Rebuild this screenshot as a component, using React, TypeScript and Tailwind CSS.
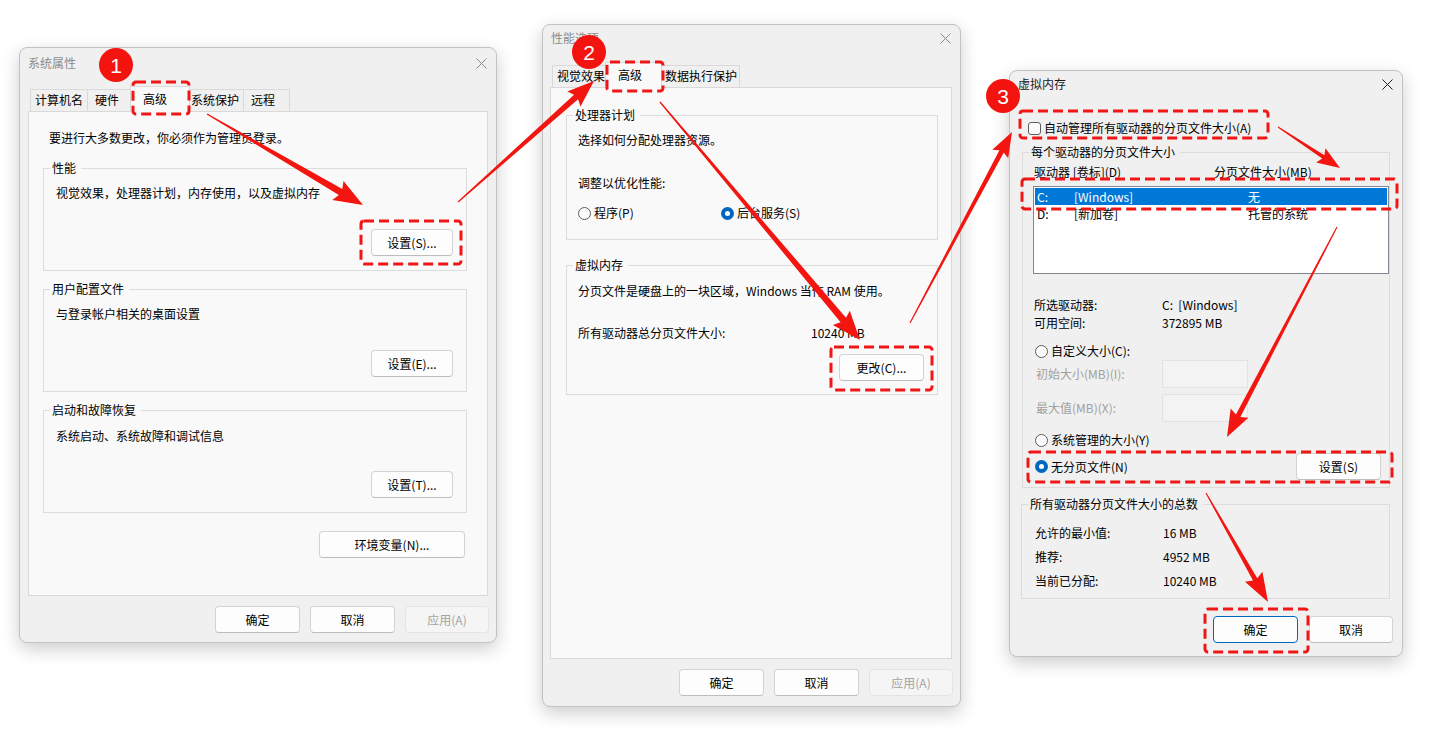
import React from 'react';

type Pt = [number, number];

// tapered annotation arrow: thin tail, wider neck, triangular head
function arrowPoints(tail: Pt, tip: Pt, shaft: number, headL: number, headW: number) {
  const dx = tip[0] - tail[0];
  const dy = tip[1] - tail[1];
  const len = Math.hypot(dx, dy);
  const ux = dx / len;
  const uy = dy / len;
  const nx = -uy;
  const ny = ux;
  const neck: Pt = [tip[0] - ux * headL, tip[1] - uy * headL];
  const wing: Pt = [tip[0] - ux * (headL + 3), tip[1] - uy * (headL + 3)];
  const p = (b: Pt, s: number) => `${(b[0] + nx * s).toFixed(1)},${(b[1] + ny * s).toFixed(1)}`;
  return [p(tail, 0.6), p(neck, shaft / 2), p(wing, headW / 2), `${tip[0]},${tip[1]}`, p(wing, -headW / 2), p(neck, -shaft / 2), p(tail, -0.6)].join(' ');
}

const arrows: { tail: Pt; tip: Pt; shaft: number; headL: number; headW: number }[] = [
  { tail: [207, 114], tip: [363, 205], shaft: 7, headL: 26, headW: 22 },
  { tail: [458, 202], tip: [594, 81], shaft: 6, headL: 24, headW: 20 },
  { tail: [660, 102], tip: [860, 340], shaft: 7, headL: 26, headW: 22 },
  { tail: [910, 323], tip: [1012, 132], shaft: 5, headL: 22, headW: 18 },
  { tail: [1278, 127], tip: [1340, 168], shaft: 4, headL: 20, headW: 17 },
  { tail: [1337, 227], tip: [1227, 437], shaft: 5, headL: 24, headW: 20 },
  { tail: [1206, 493], tip: [1268, 602], shaft: 5, headL: 26, headW: 20 },
];

const marks = [
  [133, 82, 189, 114],
  [361, 221, 461, 264],
  [607, 62, 663, 91],
  [831, 347, 932, 390],
  [1020, 111, 1268, 138],
  [1022, 179, 1397, 209],
  [1028, 452, 1392, 482],
  [1205, 609, 1308, 652],
];

function XIcon({ active }: { active?: boolean }) {
  return (
    <svg width="11" height="11" viewBox="0 0 11 11" className="shrink-0">
      <path d="M0.5 0.5 L10.5 10.5 M10.5 0.5 L0.5 10.5" stroke={active ? '#1b1b1b' : '#8a8a8a'} strokeWidth="1" />
    </svg>
  );
}

function Win({ className, title, titleH, active, children }: { className: string; title: string; titleH: string; active?: boolean; children: React.ReactNode }) {
  return (
    <div className={`absolute flex flex-col rounded-[8px] border border-[#c2c2c2] bg-[#f0f0f0] shadow-[0_6px_18px_rgba(0,0,0,0.2)] ${className}`}>
      <div className={`flex shrink-0 items-center justify-between pl-[8px] pr-[9px] ${titleH}`}>
        <span className={active ? 'text-[#1a1a1a]' : 'text-[#8c8c8c]'}>{title}</span>
        <XIcon active={active} />
      </div>
      {children}
    </div>
  );
}

function Btn({ children, className = '', disabled, focused }: { children: React.ReactNode; className?: string; disabled?: boolean; focused?: boolean }) {
  const look = disabled
    ? 'border-[#e4e4e4] bg-[#f5f5f5] text-[#a3a3a3]'
    : focused
      ? 'border-[#0067c0] bg-[#fdfdfd] text-black'
      : 'border-[#d3d3d3] border-b-[#bdbdbd] bg-[#fdfdfd] text-black';
  return (
    <div className={`flex h-[27px] shrink-0 items-center justify-center rounded-[4px] border ${look} ${className}`}>
      {children}
    </div>
  );
}

function Group({ label, className, children }: { label: string; className: string; children: React.ReactNode }) {
  return (
    <fieldset className={`min-w-0 border border-[#dcdcdc] ${className}`}>
      <legend className="ml-[6px] pl-[2px] pr-[5px]">{label}</legend>
      {children}
    </fieldset>
  );
}

function Radio({ checked, label }: { checked?: boolean; label: string }) {
  return (
    <span className="flex items-center whitespace-nowrap">
      {checked ? (
        <span className="flex h-[13px] w-[13px] items-center justify-center rounded-full bg-[#0067c0]">
          <span className="h-[5px] w-[5px] rounded-full bg-white" />
        </span>
      ) : (
        <span className="h-[13px] w-[13px] rounded-full border border-[#5d5d5d] bg-[#fbfbfb]" />
      )}
      <span className="ml-[3px]">{label}</span>
    </span>
  );
}

type Tab = { label: string; cls: string; sel?: boolean };

function Tabs({ tabs, className }: { tabs: Tab[]; className: string }) {
  return (
    <div className={`flex h-[25px] items-end ${className}`}>
      {tabs.map((t) =>
        t.sel ? (
          <div key={t.label} className={`relative z-10 -mx-[2px] -mb-[1px] h-[26px] whitespace-nowrap border border-b-0 border-[#d9d9d9] bg-[#f9f9f9] pt-[4px] ${t.cls}`}>
            {t.label}
          </div>
        ) : (
          <div key={t.label} className={`h-[22px] whitespace-nowrap border-t border-r border-[#d9d9d9] bg-[#f0f0f0] pt-[2px] ${t.cls}`}>
            {t.label}
          </div>
        ),
      )}
    </div>
  );
}

function SystemProps() {
  return (
    <Win className="left-[19px] top-[47px] h-[596px] w-[478px]" title="系统属性" titleH="h-[30px]">
      <Tabs
        className="mt-[8px] pl-[10px]"
        tabs={[
          { label: '计算机名', cls: 'w-[58px] border-l pl-[4px]' },
          { label: '硬件', cls: 'w-[44px] pl-[7px]' },
          { label: '高级', cls: 'w-[60px] pl-[12px]', sel: true },
          { label: '系统保护', cls: 'w-[56px] pl-[3px]' },
          { label: '远程', cls: 'w-[46px] pl-[7px]' },
        ]}
      />
      <div className="ml-[8px] h-[485px] w-[460px] border border-[#d9d9d9] bg-[#f9f9f9]">
        <p className="ml-[20px] mt-[18px]">要进行大多数更改，你必须作为管理员登录。</p>
        <Group label="性能" className="ml-[14px] mt-[14px] w-[424px]">
          <div className="pb-[14px] pl-[12px] pr-[13px] pt-[9px]">
            <p>视觉效果，处理器计划，内存使用，以及虚拟内存</p>
            <div className="mt-[28px] flex justify-end">
              <Btn className="w-[82px]">设置(S)...</Btn>
            </div>
          </div>
        </Group>
        <Group label="用户配置文件" className="ml-[14px] mt-[10px] w-[424px]">
          <div className="pb-[14px] pl-[12px] pr-[13px] pt-[9px]">
            <p>与登录帐户相关的桌面设置</p>
            <div className="mt-[28px] flex justify-end">
              <Btn className="w-[82px]">设置(E)...</Btn>
            </div>
          </div>
        </Group>
        <Group label="启动和故障恢复" className="ml-[14px] mt-[10px] w-[424px]">
          <div className="pb-[14px] pl-[12px] pr-[13px] pt-[10px]">
            <p>系统启动、系统故障和调试信息</p>
            <div className="mt-[27px] flex justify-end">
              <Btn className="w-[82px]">设置(T)...</Btn>
            </div>
          </div>
        </Group>
        <div className="mt-[18px] flex justify-end pr-[22px]">
          <Btn className="w-[146px]">环境变量(N)...</Btn>
        </div>
      </div>
      <div className="mt-[10px] flex justify-end gap-[10px] pr-[7px]">
        <Btn className="w-[85px]">确定</Btn>
        <Btn className="w-[85px]">取消</Btn>
        <Btn className="w-[84px]" disabled>应用(A)</Btn>
      </div>
    </Win>
  );
}

function PerfOptions() {
  return (
    <Win className="left-[542px] top-[24px] h-[683px] w-[419px]" title="性能选项" titleH="h-[26px]">
      <Tabs
        className="mt-[11px] pl-[9px]"
        tabs={[
          { label: '视觉效果', cls: 'w-[55px] border-l pl-[4px]' },
          { label: '高级', cls: 'w-[57px] pl-[12px]', sel: true },
          { label: '数据执行保护', cls: 'w-[80px] pl-[5px]' },
        ]}
      />
      <div className="ml-[7px] h-[572px] w-[402px] border border-[#d9d9d9] bg-[#f9f9f9]">
        <Group label="处理器计划" className="ml-[15px] mt-[19px] w-[372px]">
          <div className="pb-[18px] pl-[11px] pt-[9px]">
            <p>选择如何分配处理器资源。</p>
            <p className="mt-[27px]">调整以优化性能:</p>
            <div className="mt-[14px] flex">
              <div className="w-[143px]">
                <Radio label="程序(P)" />
              </div>
              <Radio checked label="后台服务(S)" />
            </div>
          </div>
        </Group>
        <Group label="虚拟内存" className="ml-[15px] mt-[17px] w-[372px]">
          <div className="pb-[13px] pl-[11px] pr-[13px] pt-[10px]">
            <p className="whitespace-nowrap">分页文件是硬盘上的一块区域，Windows 当作 RAM 使用。</p>
            <div className="mt-[26px] flex">
              <span className="w-[233px]">所有驱动器总分页文件大小:</span>
              <span>10240 MB</span>
            </div>
            <div className="mt-[13px] flex justify-end">
              <Btn className="w-[85px]">更改(C)...</Btn>
            </div>
          </div>
        </Group>
      </div>
      <div className="mt-[10px] flex justify-end gap-[10px] pr-[7px]">
        <Btn className="w-[85px]">确定</Btn>
        <Btn className="w-[85px]">取消</Btn>
        <Btn className="w-[84px]" disabled>应用(A)</Btn>
      </div>
    </Win>
  );
}

const drives = [
  { d: 'C:', vol: '[Windows]', size: '无', sel: true },
  { d: 'D:', vol: '[新加卷]', size: '托管的系统' },
];

function VirtualMemory() {
  return (
    <Win className="left-[1009px] top-[70px] h-[587px] w-[394px]" title="虚拟内存" titleH="h-[26px]" active>
      <div className="mt-[23px] flex items-center pl-[18px]">
        <span className="h-[13px] w-[13px] rounded-[3px] border border-[#5d5d5d] bg-[#fbfbfb]" />
        <span className="ml-[3px]">自动管理所有驱动器的分页文件大小(A)</span>
      </div>
      <Group label="每个驱动器的分页文件大小" className="ml-[12px] mt-[8px] w-[368px]">
        <div className="pb-[7px] pl-[11px] pr-[8px] pt-[4px]">
          <div className="flex">
            <span className="w-[180px]">驱动器 [卷标](D)</span>
            <span>分页文件大小(MB)</span>
          </div>
          <div className="-ml-[1px] mt-[6px] h-[88px] w-[356px] border border-[#828790] bg-white p-[1px]">
            {drives.map((r) => (
              <div key={r.d} className={`flex h-[17px] items-center pl-[2px] ${r.sel ? 'bg-[#0078d7] text-white' : ''}`}>
                <span className="w-[37px]">{r.d}</span>
                <span className="w-[174px]">{r.vol}</span>
                <span>{r.size}</span>
              </div>
            ))}
          </div>
          <div className="mt-[22px] flex h-[18px] items-center">
            <span className="w-[128px]">所选驱动器:</span>
            <span>C:&nbsp;&nbsp;[Windows]</span>
          </div>
          <div className="flex h-[18px] items-center">
            <span className="w-[128px]">可用空间:</span>
            <span>372895 MB</span>
          </div>
          <div className="mt-[10px] flex h-[18px] items-center pl-[1px]">
            <Radio label="自定义大小(C):" />
          </div>
          <div className="flex h-[28px] items-center text-[#a0a0a0]">
            <span className="w-[128px] pl-[2px]">初始大小(MB)(I):</span>
            <span className="h-[28px] w-[86px] border border-[#e2e2e2] bg-[#f3f3f3]" />
          </div>
          <div className="mt-[6px] flex h-[28px] items-center text-[#a0a0a0]">
            <span className="w-[128px] pl-[2px]">最大值(MB)(X):</span>
            <span className="h-[28px] w-[86px] border border-[#e2e2e2] bg-[#f3f3f3]" />
          </div>
          <div className="mt-[9px] flex h-[18px] items-center pl-[1px]">
            <Radio label="系统管理的大小(Y)" />
          </div>
          <div className="mt-[4px] flex h-[27px] items-center justify-between pl-[1px]">
            <Radio checked label="无分页文件(N)" />
            <Btn className="w-[85px]">设置(S)</Btn>
          </div>
        </div>
      </Group>
      <Group label="所有驱动器分页文件大小的总数" className="ml-[11px] mt-[8px] w-[369px]">
        <div className="flex flex-col gap-[8px] pb-[9px] pl-[13px] pt-[13px]">
          {[
            ['允许的最小值:', '16 MB'],
            ['推荐:', '4952 MB'],
            ['当前已分配:', '10240 MB'],
          ].map(([k, v]) => (
            <div key={k} className="flex h-[16px] items-center">
              <span className="w-[128px]">{k}</span>
              <span>{v}</span>
            </div>
          ))}
        </div>
      </Group>
      <div className="mt-[17px] flex justify-end gap-[11px] pr-[9px]">
        <Btn className="w-[85px]" focused>确定</Btn>
        <Btn className="w-[84px]">取消</Btn>
      </div>
    </Win>
  );
}

const badges = [
  { n: '1', cls: 'left-[99px] top-[48px]' },
  { n: '2', cls: 'left-[572px] top-[35px]' },
  { n: '3', cls: 'left-[986px] top-[79px]' },
];

export default function App() {
  return (
    <div className="relative h-[732px] w-[1436px] overflow-hidden bg-white font-['Noto_Sans_CJK_SC','Noto_Sans',sans-serif] text-[12px] leading-[16px] text-black">
      <SystemProps />
      <PerfOptions />
      <VirtualMemory />

      {/* annotations */}
      <svg className="pointer-events-none absolute left-0 top-0 z-20" width="1436" height="732" viewBox="0 0 1436 732">
        {marks.map(([x1, y1, x2, y2], i) => (
          <rect key={i} x={x1} y={y1} width={x2 - x1} height={y2 - y1} rx="3" fill="none" stroke="#f01616" strokeWidth="3" strokeDasharray="10 5" />
        ))}
        {arrows.map((a, i) => (
          <polygon key={i} points={arrowPoints(a.tail, a.tip, a.shaft, a.headL, a.headW)} fill="#f3150f" />
        ))}
      </svg>
      {badges.map((b) => (
        <div key={b.n} className={`absolute z-30 flex h-[34px] w-[34px] items-center justify-center rounded-full bg-[#f3140f] font-['Liberation_Sans',sans-serif] text-[21px] leading-none text-white ${b.cls}`}>
          {b.n}
        </div>
      ))}
    </div>
  );
}
